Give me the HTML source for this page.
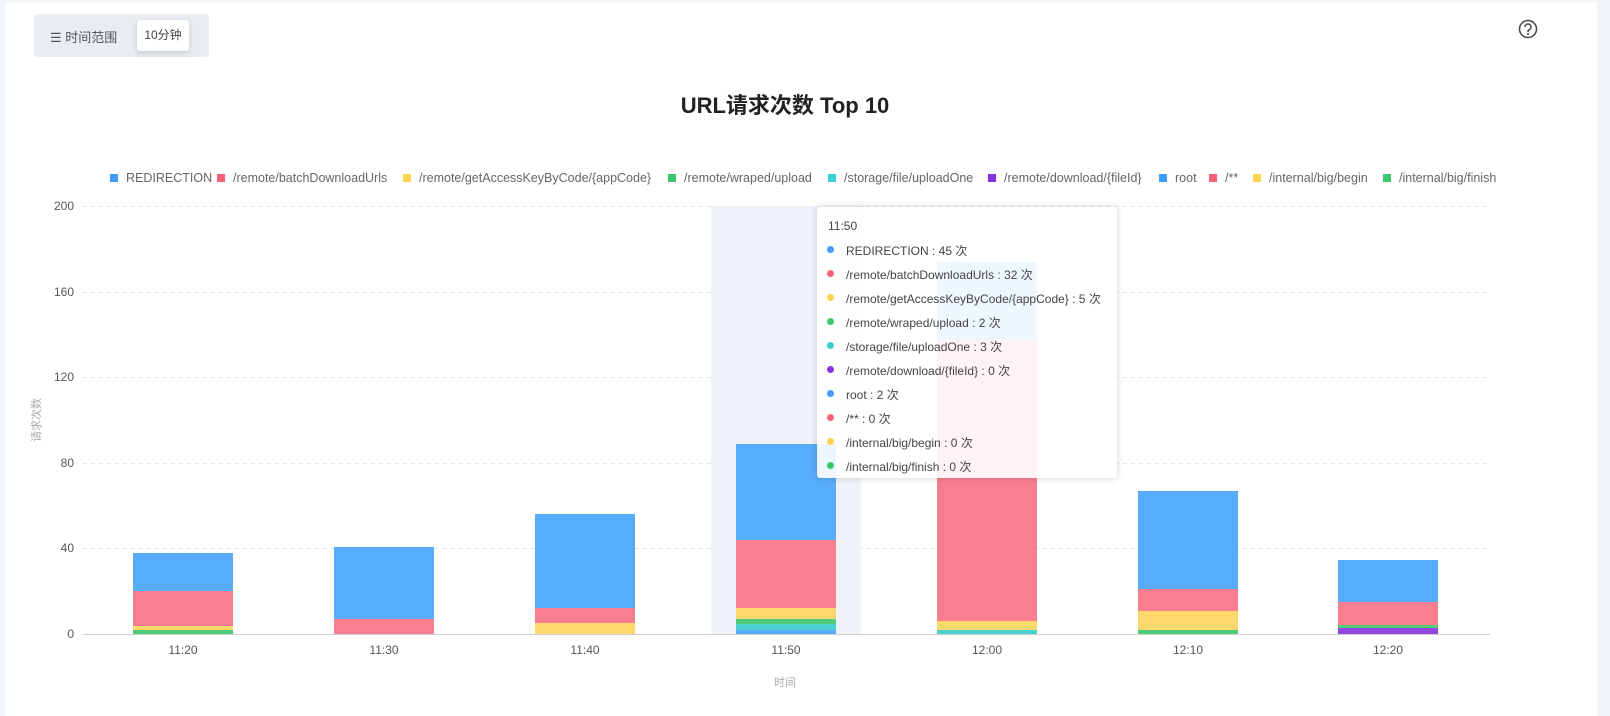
<!DOCTYPE html>
<html><head><meta charset="utf-8"><style>
body{margin:0;width:1610px;height:716px;background:#f3f6f8;font-family:"Liberation Sans","Noto Sans CJK SC",sans-serif;overflow:hidden;position:relative}
.card{position:absolute;left:5px;top:3px;width:1592px;height:713px;background:#fff}
.tr{position:absolute;left:34px;top:14px;width:175px;height:43px;background:#e9edf1;border-radius:4px}
.tr .l{position:absolute;left:16px;top:13px;font-size:13px;color:#555}
.tr .b{position:absolute;left:103px;top:6px;width:52px;height:31px;background:#fff;border-radius:3px;box-shadow:0 2px 6px rgba(0,0,0,.15);font-size:12px;color:#444;line-height:31px;text-align:center}
.title{position:absolute;left:0;width:1570px;top:88px;text-align:center;font-size:22px;font-weight:bold;color:#222}
.leg{position:absolute;left:0;top:171px;font-size:12.5px;color:#666;white-space:nowrap}
.leg span{position:absolute;top:0;display:flex;align-items:center}
.leg i{width:8px;height:8px;display:inline-block;margin-right:8px}
.tip{position:absolute;left:817px;top:207px;width:300px;height:271px;background:rgba(255,255,255,.9);border-radius:3px;box-shadow:0 0 8px rgba(0,0,0,.18);font-size:12px;color:#444}
.tip div{position:absolute;left:29px;white-space:nowrap}
.tip i{position:absolute;left:-19px;top:4px;width:7px;height:7px;border-radius:50%}
</style></head><body>
<div class="card"></div>
<div class="tr"><span class="l">☰ 时间范围</span><span class="b">10分钟</span></div>
<svg style="position:absolute;left:1517px;top:19px" width="22" height="22" viewBox="0 0 22 22"><circle cx="11" cy="10" r="8.5" fill="none" stroke="#444" stroke-width="1.5"/><path d="M8 8a3 3 0 1 1 4 2.8c-.7.3-1 .8-1 1.5v.8" fill="none" stroke="#444" stroke-width="1.5"/><circle cx="11" cy="15" r="1" fill="#444"/></svg>
<div class="title">URL请求次数 Top 10</div>
<div class="leg">
<span style="left:110px"><i style="background:#3f9cf7"></i>REDIRECTION</span><span style="left:217px"><i style="background:#f5617a"></i>/remote/batchDownloadUrls</span><span style="left:403px"><i style="background:#fdd24e"></i>/remote/getAccessKeyByCode/{appCode}</span><span style="left:668px"><i style="background:#3ec66a"></i>/remote/wraped/upload</span><span style="left:828px"><i style="background:#3ccfcf"></i>/storage/file/uploadOne</span><span style="left:988px"><i style="background:#8533e0"></i>/remote/download/{fileId}</span><span style="left:1159px"><i style="background:#3f9cf7"></i>root</span><span style="left:1209px"><i style="background:#f5617a"></i>/**</span><span style="left:1253px"><i style="background:#fdd24e"></i>/internal/big/begin</span><span style="left:1383px"><i style="background:#3ec66a"></i>/internal/big/finish</span>
</div>
<svg style="position:absolute;left:0;top:0" width="1610" height="716" font-family="Liberation Sans,Noto Sans CJK SC,sans-serif">
<g stroke="#e6e6e6" stroke-dasharray="4,4"><line x1="83" x2="1490" y1="206.5" y2="206.5"/><line x1="83" x2="1490" y1="292.5" y2="292.5"/><line x1="83" x2="1490" y1="377.5" y2="377.5"/><line x1="83" x2="1490" y1="463.5" y2="463.5"/><line x1="83" x2="1490" y1="548.5" y2="548.5"/></g>
<rect x="711" y="206" width="150" height="428" fill="#eef3fa"/>
<g font-size="12" fill="#555" text-anchor="end"><text x="74" y="210">200</text><text x="74" y="296">160</text><text x="74" y="381">120</text><text x="74" y="467">80</text><text x="74" y="552">40</text><text x="74" y="638">0</text></g>
<text x="40" y="420" font-size="11" fill="#aaa" transform="rotate(-90 40 420)" text-anchor="middle">请求次数</text>
<text x="785" y="686" font-size="11" fill="#aaa" text-anchor="middle">时间</text>
<g>
<rect x="133" y="630" width="100" height="4" fill="#50cb78"/><rect x="133" y="626" width="100" height="4" fill="#fcd86d"/><rect x="133" y="591" width="100" height="35" fill="#f97f90"/><rect x="133" y="553" width="100" height="38" fill="#57adfb"/>
<rect x="334" y="619" width="100" height="15" fill="#f97f90"/><rect x="334" y="547" width="100" height="72" fill="#57adfb"/>
<rect x="535" y="623" width="100" height="11" fill="#fcd86d"/><rect x="535" y="608" width="100" height="15" fill="#f97f90"/><rect x="535" y="514" width="100" height="94" fill="#57adfb"/>
<rect x="736" y="630" width="100" height="4" fill="#57adfb"/><rect x="736" y="624" width="100" height="6" fill="#4ad0d0"/><rect x="736" y="619" width="100" height="5" fill="#50cb78"/><rect x="736" y="608" width="100" height="11" fill="#fcd86d"/><rect x="736" y="540" width="100" height="68" fill="#f97f90"/><rect x="736" y="444" width="100" height="96" fill="#57adfb"/>
<rect x="937" y="630" width="100" height="4" fill="#4ad0d0"/><rect x="937" y="621" width="100" height="9" fill="#fcd86d"/><rect x="937" y="340" width="100" height="281" fill="#f97f90"/><rect x="937" y="262" width="100" height="78" fill="#57adfb"/>
<rect x="1138" y="630" width="100" height="4" fill="#50cb78"/><rect x="1138" y="611" width="100" height="19" fill="#fcd86d"/><rect x="1138" y="589" width="100" height="22" fill="#f97f90"/><rect x="1138" y="491" width="100" height="98" fill="#57adfb"/>
<rect x="1338" y="628" width="100" height="6" fill="#9346e0"/><rect x="1338" y="625" width="100" height="3" fill="#50cb78"/><rect x="1338" y="602" width="100" height="23" fill="#f97f90"/><rect x="1338" y="560" width="100" height="42" fill="#57adfb"/>
</g>
<line x1="83" x2="1490" y1="634.5" y2="634.5" stroke="#ccc"/>
<g font-size="12" fill="#555" text-anchor="middle"><text x="183" y="654">11:20</text><text x="384" y="654">11:30</text><text x="585" y="654">11:40</text><text x="786" y="654">11:50</text><text x="987" y="654">12:00</text><text x="1188" y="654">12:10</text><text x="1388" y="654">12:20</text></g>
</svg>
<div class="tip">
<div style="left:11px;top:12px">11:50</div>
<div style="top:35px"><i style="background:#3f9cf7"></i>REDIRECTION : 45 次</div>
<div style="top:59px"><i style="background:#f5617a"></i>/remote/batchDownloadUrls : 32 次</div>
<div style="top:83px"><i style="background:#fdd24e"></i>/remote/getAccessKeyByCode/{appCode} : 5 次</div>
<div style="top:107px"><i style="background:#3ec66a"></i>/remote/wraped/upload : 2 次</div>
<div style="top:131px"><i style="background:#3ccfcf"></i>/storage/file/uploadOne : 3 次</div>
<div style="top:155px"><i style="background:#8533e0"></i>/remote/download/{fileId} : 0 次</div>
<div style="top:179px"><i style="background:#3f9cf7"></i>root : 2 次</div>
<div style="top:203px"><i style="background:#f5617a"></i>/** : 0 次</div>
<div style="top:227px"><i style="background:#fdd24e"></i>/internal/big/begin : 0 次</div>
<div style="top:251px"><i style="background:#3ec66a"></i>/internal/big/finish : 0 次</div>
</div>
</body></html>
